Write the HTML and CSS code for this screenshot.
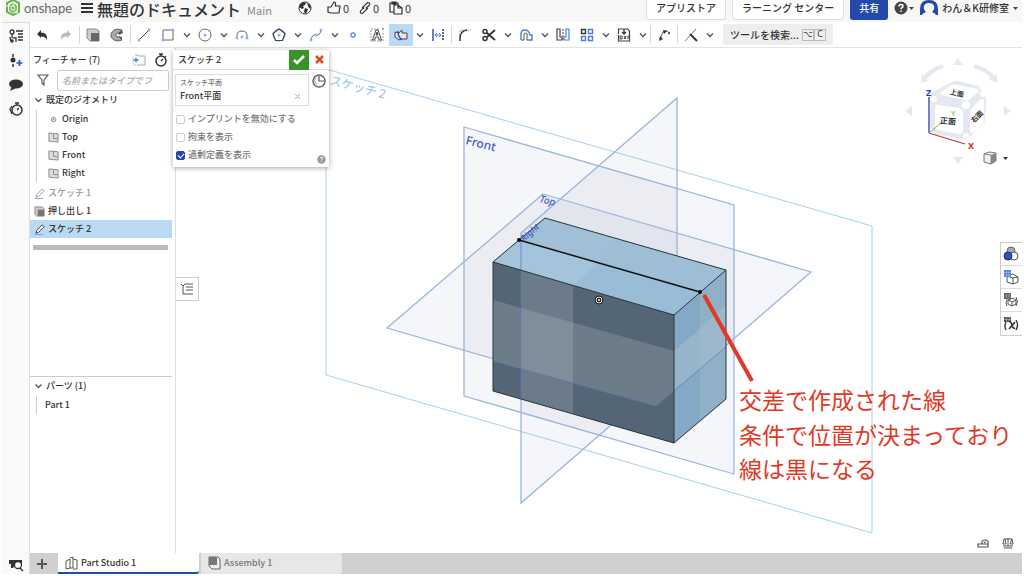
FILE: index.html
```html
<!DOCTYPE html>
<html lang="ja">
<head>
    <meta charset="UTF-8">
    <meta name="viewport" content="width=device-width, initial-scale=1.0">
    <title>無題のドキュメント</title>
    <link rel="stylesheet" href="styles.css">
</head>
<body>
    <svg class="defs" aria-hidden="true">
        <symbol id="chev" viewBox="0 0 8 8"><path d="M1 2.500l3 3 3-3" fill="none" stroke="#555" stroke-width="1.400"/></symbol>
        <symbol id="plane" viewBox="0 0 12 12"><path d="M1 1l10 1v9l-10-1z" fill="#ddd" stroke="#888"/><path d="M6 2v5l5 .5" fill="none" stroke="#888"/></symbol>
        <symbol id="pencil" viewBox="0 0 12 12"><path d="M2 10l1-3 6-6 2 2-6 6z" fill="#fff" stroke="currentColor"/><path d="M1 11.500h9" stroke="#7d9be0"/></symbol>
    </svg>

    <header class="header">
        <svg class="logo" width="16" height="16" viewBox="0 0 16 16"><path d="M8 0l6 3v9l-6 3-6-3V3z" fill="none" stroke="#68b346" stroke-width="2"/><path d="M8 4l3 2v4l-3 2-3-2V6z" fill="none" stroke="#68b346" stroke-width="1.500"/><path d="M1 6h4M11 2l-3 3M9 12l4 1" stroke="#f7f7f7"/><circle cx="8" cy="8" r="1.500" fill="#68b346"/></svg>
        <span class="brand">onshape</span>
        <button class="plain menu" aria-label="メニュー"><svg width="12" height="12" viewBox="0 0 12 12"><path d="M0 2h12M0 6h12M0 10h12" stroke="#333" stroke-width="2"/></svg></button>
        <h1>無題のドキュメント</h1>
        <span class="branch">Main</span>
        <svg class="globe" width="14" height="14" viewBox="0 0 14 14"><circle cx="7" cy="7" r="6" fill="#fff" stroke="#333"/><path d="M2 3l3-2 3 1-1 2-2 1 1 2-2 1-3-2zM7 7l3 1-1 3-2 2-1-3zM9 2l3 2 1 4-2-1-1-2z" fill="#333"/></svg>
        <button class="plain stat"><svg width="14" height="14" viewBox="0 0 14 14"><path d="M1 6h3l3-5q2 0 1.500 4H13l-1 7H4L1 11z" fill="none" stroke="#333" stroke-width="1.200"/></svg>0</button>
        <button class="plain stat"><svg width="12" height="14" viewBox="0 0 12 14"><path d="M5 8L3.500 6.500l5-5q3 0 2 2.500L7 7.500M7 6l1.500 1.500-5 5q-3 0-2-2.500L5 6" fill="none" stroke="#333" stroke-width="1.100"/></svg>0</button>
        <button class="plain stat"><svg width="14" height="14" viewBox="0 0 14 14"><path d="M5 11H1V2h8v2M3 1h4v2H3zM5 4h4l4 3v6H5zM9 4v3h4" fill="none" stroke="#333" stroke-width="1.200"/></svg>0</button>
        <nav class="account">
            <button class="box">アプリストア</button>
            <button class="box">ラーニング センター</button>
            <button class="share">共有</button>
            <button class="plain help" aria-label="ヘルプ"><svg width="20" height="14" viewBox="0 0 20 14"><circle cx="7" cy="7" r="6.500" fill="#444"/><path d="M5 5.500q0-2 2-2t2 1.700q0 1-1.200 1.500-.8.500-.8 1.500M7 9.500v1.500" fill="none" stroke="#fff" stroke-width="1.500"/><path d="M15 6h5l-2.500 3z" fill="#444"/></svg></button>
            <button class="plain user"><svg width="18" height="16" viewBox="0 0 18 16"><path d="M0 15V9Q0 0 9 0t9 9v6h-2q-1-2-4-3 3-3 2-6-1-3-5-3T4 6q-1 3 2 6-3 1-4 3z" fill="#2349ad"/></svg>わん＆K研修室<svg width="6" height="5" viewBox="0 0 6 5"><path d="M0 1h5L2.500 4z" fill="#444"/></svg></button>
        </nav>
    </header>

    <div class="app">
        <aside class="rail">
            <button class="plain first" aria-label="フィーチャーリスト"><svg width="16" height="16" viewBox="0 0 16 16"><g fill="none" stroke="#333" stroke-width="1.300"><circle cx="4" cy="4" r="2"/><path d="M4 6v3q0 1 4 1v4M8 3h7M10 6h5M10 9h5M10 12h5M2 9l1 4"/></g><circle cx="4" cy="13" r="1.700" fill="#333"/></svg></button>
            <button class="plain" aria-label="挿入"><svg width="16" height="16" viewBox="0 0 16 16"><path d="M5 1v14" stroke="#333" stroke-width="1.500" stroke-dasharray="3 2"/><circle cx="5" cy="7" r="2.500" fill="#333"/><path d="M11.500 7v6M8.500 10h6" stroke="#2b54c8" stroke-width="1.700"/></svg></button>
            <button class="plain" aria-label="コメント"><svg width="16" height="16" viewBox="0 0 16 16"><ellipse cx="8" cy="7" rx="7" ry="4.500" fill="#333"/><path d="M4 9l-2 5 6-3z" fill="#333"/></svg></button>
            <button class="plain" aria-label="履歴"><svg width="16" height="16" viewBox="0 0 16 16"><circle cx="9" cy="9" r="5" fill="none" stroke="#333" stroke-width="1.500"/><path d="M9 4V2M7 2h4M9 9l2-2M4 5L2 8l2 5" fill="none" stroke="#333" stroke-width="1.300"/></svg></button>
            <button class="plain last" aria-label="タブを検索"><svg width="16" height="16" viewBox="0 0 16 16"><path d="M1 3h13v4H8L5 11H3V7H1z" fill="#333"/><circle cx="10" cy="8" r="3.500" fill="#fff" stroke="#333" stroke-width="1.300"/><path d="M12 11l3 3" stroke="#333" stroke-width="1.500"/></svg></button>
        </aside>

        <div class="main">
            <div class="toolbar">
                <button class="tool" aria-label="元に戻す"><svg viewBox="0 0 16 16"><path d="M3 7l4-4v2.500q7 0 6 8-1-4-6-4V11z" fill="#333"/></svg></button>
                <button class="tool" aria-label="やり直し"><svg viewBox="0 0 16 16"><path d="M13 7L9 3v2.500q-7 0-6 8 1-4 6-4V11z" fill="#bbb"/></svg></button>
                <i class="sep"></i>
                <button class="tool" aria-label="押し出し"><svg viewBox="0 0 16 16"><path d="M2 2h9l3 2v10H5l-3-3z" fill="#ccc" stroke="#888"/><path d="M6 6h8v8H6z" fill="#666"/></svg></button>
                <button class="tool" aria-label="回転"><svg viewBox="0 0 16 16"><path d="M13 3Q9 1 5 3 1 6 2 10q2 4 7 4l4-1-2-3q-4 1-4-2t4-2z" fill="#aaa" stroke="#666"/><path d="M9 6l4-3 1 3-4 2zM9 9l4 1v3" fill="#555"/></svg></button>
                <i class="sep"></i>
                <button class="tool" aria-label="線"><svg viewBox="0 0 16 16"><path d="M3 13L13 3" stroke="#444"/><circle class="pt" cx="3" cy="13" r="1.500"/><circle class="pt" cx="13" cy="3" r="1.500"/></svg></button>
                <button class="tool" aria-label="矩形"><svg viewBox="0 0 16 16"><path class="ln" d="M3 3h10v10H3z"/><circle class="pt" cx="3" cy="13" r="1.500"/><circle class="pt" cx="13" cy="3" r="1.500"/></svg></button>
                <button class="drop" aria-label="矩形の種類"><svg><use href="#chev"/></svg></button>
                <button class="tool" aria-label="円"><svg viewBox="0 0 16 16"><circle class="ln" cx="8" cy="8" r="6"/><circle class="pt" cx="8" cy="8" r="1.500"/><circle class="pt" cx="12.500" cy="4" r="1.200"/></svg></button>
                <button class="drop" aria-label="円の種類"><svg><use href="#chev"/></svg></button>
                <button class="tool" aria-label="円弧"><svg viewBox="0 0 16 16"><path class="ln" d="M3 11Q2 4 8 4t5 7"/><circle class="pt" cx="3" cy="11" r="1.500"/><circle class="pt" cx="8" cy="10" r="1.500"/><circle class="pt" cx="13" cy="11" r="1.500"/></svg></button>
                <button class="drop" aria-label="円弧の種類"><svg><use href="#chev"/></svg></button>
                <button class="tool" aria-label="多角形"><svg viewBox="0 0 16 16"><circle cx="8" cy="8" r="6" fill="none" stroke="#8ba8e8"/><path d="M8 2l6 4.500-2.500 7h-7L2 6.500z" fill="none" stroke="#444" stroke-width="1.200"/><circle class="pt" cx="8" cy="8" r="1.500"/></svg></button>
                <button class="drop" aria-label="多角形の種類"><svg><use href="#chev"/></svg></button>
                <button class="tool" aria-label="スプライン"><svg viewBox="0 0 16 16"><path class="ln" d="M3 13q1-6 5-5t5-5"/><circle class="pt" cx="3" cy="13" r="1.500"/><circle class="pt" cx="8" cy="8" r="1.500"/><circle class="pt" cx="13" cy="3" r="1.500"/></svg></button>
                <button class="drop" aria-label="スプラインの種類"><svg><use href="#chev"/></svg></button>
                <button class="tool" aria-label="点"><svg viewBox="0 0 16 16"><circle cx="8" cy="8" r="2.200" fill="none" stroke="#4c7bdf" stroke-width="1.200"/></svg></button>
                <button class="tool" aria-label="テキスト"><svg viewBox="0 0 16 16"><path d="M2 14V2h9M2 14h12V6" fill="none" stroke="#999" stroke-dasharray="2 1"/><path d="M3.500 13L7 3h2l3.500 10h-2.300L9.300 10H6.500l-.8 3zM7 8h2L8 5z" fill="#fff" stroke="#444"/><circle class="pt" cx="14" cy="2" r="1.200"/></svg></button>
                <button class="tool active" aria-label="使用"><svg viewBox="0 0 16 16"><path d="M2 5l4 1 3-3v3h5v6H9l-3 1-4-3z" fill="#e7e7e7" stroke="#444"/><path d="M5 4q0 6 4 9" fill="none" stroke="#2b54c8" stroke-width="1.500"/></svg></button>
                <button class="drop" aria-label="使用の種類"><svg><use href="#chev"/></svg></button>
                <button class="tool" aria-label="寸法"><svg viewBox="0 0 16 16"><path d="M3 2v12" stroke="#2b54c8" stroke-width="1.500"/><path d="M13 2v12" stroke="#333" stroke-width="1.500" stroke-dasharray="2 1"/><path d="M5 8h6M7 6L5 8l2 2M9 6l2 2-2 2" fill="none" stroke="#4c7bdf"/></svg></button>
                <i class="sep"></i>
                <button class="tool" aria-label="フィレット"><svg viewBox="0 0 16 16"><path d="M3 14v-3q0-7 7-8" fill="none" stroke="#333" stroke-width="1.500"/><path d="M3 8V3h5M10 3h4" fill="none" stroke="#8ba8e8" stroke-dasharray="2 1"/></svg></button>
                <button class="tool" aria-label="トリム"><svg viewBox="0 0 16 16"><path d="M6 6l8 7M6 10l8-7" stroke="#333" stroke-width="1.800"/><circle cx="4" cy="4.500" r="2" fill="none" stroke="#333" stroke-width="1.500"/><circle cx="4" cy="11.500" r="2" fill="none" stroke="#333" stroke-width="1.500"/></svg></button>
                <button class="drop" aria-label="トリムの種類"><svg><use href="#chev"/></svg></button>
                <button class="tool" aria-label="オフセット"><svg viewBox="0 0 16 16"><path d="M3 13V7q0-4 4-4t5 5h2v5H9" fill="none" stroke="#4c7bdf" stroke-width="1.400"/><path d="M3 13h3V8q0-2 2-2t1 4v3" fill="none" stroke="#555"/></svg></button>
                <button class="drop" aria-label="オフセットの種類"><svg><use href="#chev"/></svg></button>
                <button class="tool" aria-label="ミラー"><svg viewBox="0 0 16 16"><path d="M2 2h3v8h2v3H2z" fill="none" stroke="#444" stroke-width="1.200"/><path d="M8 2v12" stroke="#444" stroke-dasharray="2 1"/><path d="M14 2h-3v8H9v3h5z" fill="none" stroke="#4c7bdf" stroke-width="1.200"/></svg></button>
                <button class="tool" aria-label="パターン"><svg viewBox="0 0 16 16"><g fill="none" stroke="#4c7bdf" stroke-width="1.400"><path d="M2.500 2.500h4v4h-4z" stroke="#333"/><path d="M9.500 2.500h4v4h-4zM2.500 9.500h4v4h-4zM9.500 9.500h4v4h-4z"/></g></svg></button>
                <button class="drop" aria-label="パターンの種類"><svg><use href="#chev"/></svg></button>
                <button class="tool" aria-label="DXF 挿入"><svg viewBox="0 0 16 16"><path d="M2.500 7V2h9l2 2v10h-11V8" fill="none" stroke="#444" stroke-width="1.200"/><path d="M8 2v5M6 5l2 2 2-2" fill="none" stroke="#333" stroke-width="1.300"/><path d="M4 9v3h2V9zM8 9l2 3M10 9l-2 3M12 12V9h1" fill="none" stroke="#444"/></svg></button>
                <button class="drop" aria-label="挿入の種類"><svg><use href="#chev"/></svg></button>
                <i class="sep"></i>
                <button class="tool" aria-label="計測"><svg viewBox="0 0 16 16"><path d="M4 12l3-7q3-3 6 1" fill="none" stroke="#555"/><path d="M3 14l1-5 3 3zM7 3l4 1-3 3z" fill="#333"/><circle cx="13" cy="6" r="1.200" fill="#555"/></svg></button>
                <i class="sep"></i>
                <button class="tool" aria-label="拘束"><svg viewBox="0 0 16 16"><path d="M2 14L13 2" stroke="#4c7bdf"/><path d="M7 7l7 7" stroke="#333" stroke-width="2"/></svg></button>
                <button class="drop" aria-label="拘束の種類"><svg><use href="#chev"/></svg></button>
                <button class="search">ツールを検索...<span class="keys"><kbd>⌥</kbd><kbd>C</kbd></span></button>
            </div>

            <div class="workspace">
                <aside class="panel">
                    <section class="features">
                        <div class="panel-head">
                            <h2>フィーチャー (7)</h2>
                            <button class="plain" aria-label="フォルダーを追加"><svg width="14" height="12" viewBox="0 0 14 12"><path d="M3 1h3l1 1h6v9H5" fill="none" stroke="#aaa"/><path d="M1 3v8h3" fill="none" stroke="#aaa" stroke-dasharray="1 1"/><path d="M4 3.500v5M1.500 6h5" stroke="#4c7bdf" stroke-width="1.300"/></svg></button>
                            <button class="plain" aria-label="再構築時間"><svg width="14" height="14" viewBox="0 0 14 14"><circle cx="7" cy="8" r="5" fill="none" stroke="#333" stroke-width="1.500"/><path d="M7 3V1M5 1h4M7 8l2-2M11 3l1 1" stroke="#333" stroke-width="1.400"/></svg></button>
                        </div>
                        <div class="filter">
                            <svg width="12" height="12" viewBox="0 0 12 12"><path d="M1 1h10L7 6v5L5 9V6z" fill="none" stroke="#555" stroke-width="1.100"/></svg>
                            <input type="text" aria-label="フィルター" placeholder="名前またはタイプでフ">
                        </div>
                        <div class="row"><svg width="9" height="8"><use href="#chev"/></svg>既定のジオメトリ</div>
                        <ul class="children">
                            <li class="row"><svg width="11" height="11" viewBox="0 0 12 12"><circle cx="6" cy="6" r="2.500" fill="none" stroke="#888"/><circle cx="6" cy="6" r="1" fill="#777"/></svg>Origin</li>
                            <li class="row"><svg width="11" height="11"><use href="#plane"/></svg>Top</li>
                            <li class="row"><svg width="11" height="11"><use href="#plane"/></svg>Front</li>
                            <li class="row"><svg width="11" height="11"><use href="#plane"/></svg>Right</li>
                        </ul>
                        <div class="row muted"><svg width="11" height="11"><use href="#pencil"/></svg>スケッチ 1</div>
                        <div class="row"><svg width="11" height="11" viewBox="0 0 12 12"><path d="M1 1h8l2 2v8H3L1 9z" fill="#ccc" stroke="#888"/><path d="M4 4h7v7H4z" fill="#777"/></svg>押し出し 1</div>
                        <div class="row selected"><svg width="11" height="11"><use href="#pencil"/></svg>スケッチ 2</div>
                        <div class="rollback"></div>
                    </section>
                    <section class="parts">
                        <div class="row"><svg width="9" height="8"><use href="#chev"/></svg>パーツ (1)</div>
                        <ul class="children"><li class="row part">Part 1</li></ul>
                    </section>
                </aside>

                <main class="canvas">
                    <svg class="scene" viewBox="176 48 846 505" preserveAspectRatio="xMinYMin meet">
                        <path class="sketch" d="M326 69L872 226V533L326 375z"/>
                        <path class="datum" d="M464 127L734 205V474L464 396z"/>
                        <path class="datum" d="M677 98V368L521 503V233z"/>
                        <path class="datum" d="M543 194L811 272 656 406 387 328z"/>

                        <path d="M493 262L545 218 726 270 674 315z" fill="#9abdd7"/>
                        <path d="M493 262L545 218 620 240 573 286z" fill="#a4c4dc"/>
                        <path d="M519 240L545 218 726 270 700 292z" fill="#a0bfd4" opacity=".7"/>
                        <path d="M493 262L674 315V443L493 391z" fill="#546575"/>
                        <path d="M493 300L674 351V391L656 406 493 361z" fill="#a5b5b8" opacity=".3"/>
                        <path d="M521 270L573 286V414L521 399z" fill="#c2ced8" opacity=".22"/>
                        <path d="M674 315L726 270V399L674 443z" fill="#84a9c7"/>
                        <path d="M700 292L726 270V399L700 421z" fill="#9bb8c9" opacity=".5"/>
                        <path d="M674 351L726 306V347L674 391z" fill="#b2c5d0" opacity=".4"/>
                        <g fill="none" stroke="#5778b5" opacity=".7">
                            <path d="M521 240V399M493 361L656 406 726 347"/>
                        </g>
                        <path d="M493 262L674 315V443L493 391zM493 262L545 218 726 270 674 315M726 270V399L674 443" fill="none" stroke="#26343f"/>
                        <path d="M519 240L700 292" stroke="#111" stroke-width="1.500"/>
                        <circle cx="519" cy="240" r="2"/>
                        <circle cx="700" cy="292" r="2"/>
                        <circle cx="599" cy="300" r="3" fill="#222" stroke="#fff" stroke-width="1"/>
                        <circle cx="599" cy="300" r="4" fill="none" stroke="#222"/>
                        <circle cx="599" cy="300" r="1" fill="#fff"/>
                        <path d="M704 295L752 381" stroke="#df3a26" stroke-width="4"/>

                        <text class="sketch-label" transform="translate(329 84) rotate(15)">スケッチ 2</text>
                        <text class="datum-label" transform="translate(465 144) rotate(14)">Front</text>
                        <text class="datum-label small" transform="translate(539 202) rotate(14)">Top</text>
                        <text class="datum-label tiny" transform="translate(524 242) rotate(-42)">Right</text>
                        <g class="note">
                            <text x="739" y="409">交差で作成された線</text>
                            <text x="739" y="444">条件で位置が決まっており</text>
                            <text x="739" y="478">線は黒になる</text>
                        </g>
                    </svg>

                    <form class="dialog">
                        <div class="dialog-head">
                            <h2>スケッチ 2</h2>
                            <button type="button" class="ok" aria-label="確定"><svg width="12" height="12" viewBox="0 0 12 12"><path d="M1 6l3 3 7-7" fill="none" stroke="#fff" stroke-width="2.500"/></svg></button>
                            <button type="button" class="plain cancel" aria-label="キャンセル"><svg width="9" height="9" viewBox="0 0 9 9"><path d="M1 1l7 7M8 1L1 8" stroke="#dc4a22" stroke-width="2.500"/></svg></button>
                        </div>
                        <div class="dialog-body">
                            <div class="plane-row">
                                <div class="plane-field">
                                    <label for="plane-input">スケッチ平面</label>
                                    <div class="plane-value">
                                        <input id="plane-input" type="text" value="Front平面">
                                        <button type="button" class="plain" aria-label="クリア"><svg width="7" height="7" viewBox="0 0 7 7"><path d="M1 1l5 5M6 1L1 6" stroke="#aaa"/></svg></button>
                                    </div>
                                </div>
                                <button type="button" class="plain" aria-label="履歴"><svg width="14" height="14" viewBox="0 0 14 14"><circle cx="7" cy="7" r="6" fill="none" stroke="#666" stroke-width="1.500"/><path d="M7 2v5h5" fill="none" stroke="#555" stroke-width="1.200"/><path d="M4 3.500Q1 7 5 10.500" fill="none" stroke="#999"/></svg></button>
                            </div>
                            <label class="check"><input type="checkbox">インプリントを無効にする</label>
                            <label class="check"><input type="checkbox">拘束を表示</label>
                            <label class="check"><input type="checkbox" checked>過剰定義を表示</label>
                            <button type="button" class="plain dialog-help" aria-label="ヘルプ"><svg width="9" height="9" viewBox="0 0 14 14"><circle cx="7" cy="7" r="6.500" fill="#999"/><path d="M5 5.500q0-2 2-2t2 1.700q0 1-1.200 1.500-.8.500-.8 1.500M7 9.500v1.500" fill="none" stroke="#fff" stroke-width="1.500"/></svg></button>
                        </div>
                    </form>

                    <button class="list-toggle" aria-label="リストを表示"><svg width="14" height="14" viewBox="0 0 14 14"><path d="M5 2h8M6 5h7M6 8h7M5 12h8M1 2l2 2 2-2M3 4v8h2" fill="none" stroke="#555"/></svg></button>

                    <svg class="view-cube" width="112" height="112" viewBox="903 56 112 112">
                        <g fill="#e4e8f0">
                            <path d="M958 58l5 7h-10zM958 164l5-7h-10zM905 111l7-5v10zM1011 111l-7-5v10zM921 83l1-9 6 7zM997 83l0-9-8 5z"/>
                            <path d="M931 93L952 82 957 81 979 86 986 98 985 121 967 140 935 134 930 127z"/>
                        </g>
                        <path d="M925 78q6-8 18-12M974 66q12 3 19 11" fill="none" stroke="#e4e8f0" stroke-width="4"/>
                        <g fill="#fff">
                            <path d="M941 92l10-7q2-1 6 0l20 4q4 1 1 3l-8 7q-2 2-6 1l-22-5q-4-1-1-3z"/>
                            <path d="M935 108q0-4 4-3l20 3q4 1 4 5v17q0 5-5 4l-19-4q-4-1-4-4z"/>
                            <path d="M970 112q0-3 3-5l7-7q4-3 4 1v18q0 3-3 6l-7 7q-4 3-4-1z"/>
                            <circle cx="934" cy="99" r="3"/><circle cx="966" cy="105" r="4"/><circle cx="983" cy="94" r="3"/><circle cx="966" cy="136" r="3"/>
                        </g>
                        <path d="M929 133V97" stroke="#2b35d0" stroke-width="1.300"/>
                        <path d="M929 133l36 11" stroke="#cf3030" stroke-width="1.300"/>
                        <path d="M929 133l12-10" stroke="#6bc24b"/>
                        <text x="951" y="116" class="axis y" fill="#8bd07b">Y</text>
                        <text x="940" y="124" class="face" transform="rotate(5 948 121)">正面</text>
                        <text x="950" y="96" class="face small" transform="rotate(12 958 93)">上面</text>
                        <text x="970" y="120" class="face small" transform="rotate(-45 976 117)">右面</text>
                        <text x="926" y="96" class="axis" fill="#2b35d0">Z</text>
                        <text x="968" y="149" class="axis" fill="#cf3030">X</text>
                    </svg>
                    <button class="plain view-mode" aria-label="表示"><svg width="27" height="14" viewBox="0 0 27 14"><path d="M1 3l5-2 7 1v8l-5 3-7-2z" fill="#eee" stroke="#777"/><path d="M8 4l5-2v8l-5 3z" fill="#888"/><path d="M1 3l7 1v9" fill="none" stroke="#888"/><path d="M20 6h5l-2.500 3z" fill="#333"/></svg></button>

                    <div class="side-tools">
                        <button aria-label="外観"><svg viewBox="0 0 16 16"><circle cx="8" cy="5" r="4" fill="#aaa" stroke="#666"/><circle cx="11" cy="10" r="4" fill="#fff" stroke="#555"/><circle cx="5" cy="10" r="4" fill="#2b54c8" stroke="#234"/></svg></button>
                        <button aria-label="構成"><svg viewBox="0 0 16 16"><path d="M4 7l6-2 5 3v5l-5 2-6-2zM4 7l6 2 5-1M10 9v6" fill="#fff" stroke="#555"/><path d="M1 1h7v7H1z" fill="#4c7bdf"/><path d="M3.500 1v7M6 1v7M1 3.500h7M1 6h7" stroke="#bcd" stroke-width=".5"/></svg></button>
                        <button aria-label="構成変数"><svg viewBox="0 0 16 16"><path d="M5 8l5-2 3 2v4l-4 2-4-2zM5 8l4 2 4-2M9 10v4M4 7q-2 4 0 7M13 5q3 4 0 9" fill="none" stroke="#555"/><path d="M1 1h7v6H1z" fill="#555"/><path d="M3.500 1v6M6 1v6M1 3h7M1 5h7" stroke="#bbb" stroke-width=".5"/></svg></button>
                        <button aria-label="変数"><svg viewBox="0 0 16 16"><path d="M1 1h7v5H1z" fill="#555"/><path d="M3.500 1v5M6 1v5M1 3.500h7" stroke="#bbb" stroke-width=".5"/><path d="M3 6q-2 4 0 8M13 4q3 5 0 10" fill="none" stroke="#333" stroke-width="1.400"/><path d="M6 6q2-1 3 3t3 3M12 6l-6 7" fill="none" stroke="#333" stroke-width="1.600"/></svg></button>
                    </div>
                    <div class="measure">
                        <button class="plain" aria-label="測定"><svg width="12" height="10" viewBox="0 0 12 10"><path d="M1 6h10v3H1zM5 6q-1-4 3-4t3 4M7 5q0-1 2-1" fill="none" stroke="#555" stroke-width="1.200"/></svg></button>
                        <button class="plain" aria-label="質量特性"><svg width="12" height="12" viewBox="0 0 12 12"><path d="M6 1v8M2 2h8M2 2L1 7h3L3 2M10 2L8 7h3L10 2M1 9h10M2 11h8" fill="none" stroke="#555"/></svg></button>
                    </div>
                </main>
            </div>

            <footer class="tabs">
                <button class="plain add" aria-label="タブを追加"><svg width="12" height="12" viewBox="0 0 12 12"><path d="M6 1v10M1 6h10" stroke="#555" stroke-width="2"/></svg></button>
                <button class="tab current"><svg width="13" height="14" viewBox="0 0 13 14"><path d="M1 5l4-2v9l-4 1zM5 2l3-1v11H5M8 3l4 1v9H8" fill="none" stroke="#555"/></svg>Part Studio 1</button>
                <button class="tab"><svg width="13" height="14" viewBox="0 0 13 14"><path d="M1 1h9l2 2v10H4l-3-3z" fill="#eee" stroke="#666"/><path d="M1 1h8v8H1z" fill="#777"/></svg>Assembly 1</button>
            </footer>
        </div>
    </div>
</body>
</html>
```

FILE: styles.css
```css
* {
    box-sizing: border-box;
}
body {
    margin: 0;
    padding: 0 2px 2px;
    min-height: 100vh;
    display: flex;
    flex-direction: column;
    font-family: "Noto Sans CJK JP", "Noto Sans", sans-serif;
    font-size: 9px;
    font-weight: 500;
    line-height: 16px;
    color: #333;
    background: #fff;
}
svg {
    flex: none;
}
.defs {
    position: absolute;
    width: 0;
    height: 0;
}
h1, h2, ul {
    margin: 0;
    padding: 0;
}
button, input {
    font: inherit;
    color: inherit;
}
button {
    cursor: pointer;
}
.plain {
    display: flex;
    align-items: center;
    padding: 0;
    border: 0;
    background: none;
}

/* header */
.header {
    height: 22px;
    padding: 0 3px;
    display: flex;
    align-items: flex-start;
    background: #f7f7f7;
    white-space: nowrap;
}
.brand {
    margin-left: 3px;
    width: 49px;
    font-family: Lato, sans-serif;
    font-size: 13px;
    font-weight: 400;
    color: #666;
}
.menu {
    height: 16px;
    margin: 0 4px 0 8px;
}
h1 {
    font-size: 16px;
    font-weight: 500;
    line-height: 18px;
}
.branch {
    margin: 2px 26px 0 6px;
    font-size: 11px;
    font-weight: 400;
    color: #888;
}
.globe {
    margin: 1px 15px 0 0;
}
.stat {
    height: 16px;
    margin-right: 10px;
    gap: 2px;
    font-size: 11px;
    font-weight: 400;
}
.account {
    margin-left: auto;
    display: flex;
    gap: 6px;
    font-size: 10px;
}
.box, .share {
    height: 20px;
    padding: 0 9px 4px;
    border: 1px solid #ddd;
    border-top: 0;
    border-radius: 0 0 3px 3px;
    background: #fff;
}
.share {
    border: 0;
    color: #fff;
    background: #2349ad;
}
.help, .user {
    height: 16px;
}
.user {
    gap: 4px;
}

/* side rail and toolbar */
.app {
    flex: 1;
    display: flex;
}
.rail {
    width: 28px;
    display: flex;
    flex-direction: column;
    align-items: center;
    gap: 8px;
    border-right: 1px solid #ddd;
    background: #f9f9f9;
}
.rail .first {
    width: 100%;
    height: 26px;
    justify-content: center;
    border-top: 1px solid #ddd;
    margin-bottom: -3px;
}
.rail .last {
    margin-top: auto;
    margin-bottom: 1px;
}
.main {
    flex: 1;
    min-width: 0;
    display: flex;
    flex-direction: column;
}
.toolbar {
    height: 26px;
    display: flex;
    align-items: center;
    border-bottom: 1px solid #e4e4e4;
}
.tool, .drop {
    width: 24px;
    height: 22px;
    padding: 0;
    border: 0;
    display: flex;
    align-items: center;
    justify-content: center;
    background: none;
}
.tool svg {
    width: 16px;
    height: 16px;
}
.drop {
    width: 13px;
}
.drop svg {
    width: 8px;
    height: 8px;
}
.tool.active {
    background: #b9daf2;
}
.sep {
    width: 1px;
    height: 18px;
    margin: 0 1px;
    background: #d8d8d8;
}
.ln {
    fill: none;
    stroke: #666;
}
.pt {
    fill: #8fb0f2;
}
.search {
    height: 21px;
    margin-left: 7px;
    padding: 0 7px;
    border: 0;
    display: flex;
    align-items: center;
    gap: 3px;
    font-size: 10px;
    white-space: nowrap;
    background: #eee;
}
.keys {
    display: flex;
}
kbd {
    width: 12px;
    border: 1px solid #bbb;
    font: 8px/10px "DejaVu Sans", sans-serif;
}

/* feature list */
.workspace {
    flex: 1;
    display: flex;
}
.panel {
    width: 146px;
    display: flex;
    flex-direction: column;
    border-right: 1px solid #ddd;
}
.features {
    flex: 1;
}
.parts {
    height: 35%;
    margin-right: 3px;
    border-top: 1px solid #ccc;
}
.panel-head {
    height: 21px;
    padding: 2px 7px 0 3px;
    display: flex;
    align-items: center;
    gap: 8px;
}
.panel-head h2 {
    flex: 1;
    font-size: 9px;
    font-weight: 500;
}
.filter {
    height: 22px;
    padding: 0 6px 0 7px;
    display: flex;
    align-items: center;
    gap: 8px;
}
.filter input {
    width: 100%;
    min-width: 0;
    height: 21px;
    padding: 0 4px;
    border: 1px solid #ccc;
    border-radius: 2px;
}
.filter input::placeholder {
    color: #aaa;
    font-style: italic;
}
.row {
    height: 18px;
    padding-left: 4px;
    display: flex;
    align-items: center;
    gap: 3px;
    white-space: nowrap;
}
.children {
    list-style: none;
    margin: 1px 0 2px 6px;
    padding-left: 7px;
    border-left: 1px solid #ccc;
}
.children .part {
    padding-left: 1px;
}
.muted {
    color: #999;
}
.selected {
    margin-right: 3px;
    background: #b9daf2;
}
.rollback {
    height: 5px;
    margin: 7px 7px 0 3px;
    background: #bbb;
}

/* canvas */
.canvas {
    flex: 1;
    min-width: 0;
    position: relative;
}
.scene {
    display: block;
    width: 100%;
}
.sketch {
    fill: none;
    stroke: #a9d0ec;
}
.datum {
    fill: #6d84b0;
    fill-opacity: .07;
    stroke: #9cb5dc;
    stroke-width: 1.3;
}
.sketch-label {
    font-size: 12px;
    font-weight: 400;
    fill: #8cc4ee;
}
.datum-label {
    font-family: "Noto Sans", sans-serif;
    font-size: 12px;
    font-weight: 500;
    fill: #3f5ac0;
}
.datum-label.small {
    font-size: 10px;
    font-style: italic;
}
.datum-label.tiny {
    font-size: 9px;
    font-style: italic;
}
.note text {
    font-size: 23px;
    font-weight: 400;
    fill: #df3a26;
}

/* sketch dialog */
.dialog {
    position: absolute;
    left: -3px;
    top: 2px;
    width: 156px;
    background: #fff;
    box-shadow: 0 1px 5px rgba(0, 0, 0, .35);
}
.dialog-head {
    height: 20px;
    padding-left: 5px;
    display: flex;
    border-bottom: 1px solid #ddd;
}
.dialog-head h2 {
    flex: 1;
    font-size: 9px;
    font-weight: 500;
    line-height: 19px;
}
.ok {
    width: 20px;
    height: 20px;
    padding: 0;
    border: 0;
    display: flex;
    align-items: center;
    justify-content: center;
    background: #38932a;
}
.cancel {
    width: 20px;
    justify-content: center;
}
.dialog-body {
    position: relative;
    padding: 4px 3px 3px 2px;
    color: #777;
}
.plane-row {
    display: flex;
    align-items: flex-start;
    gap: 3px;
    margin-bottom: 4px;
}
.plane-field {
    flex: 1;
    height: 32px;
    padding: 1px 4px;
    border: 1px solid #ddd;
}
.plane-field label {
    display: block;
    font-size: 7px;
    line-height: 12px;
}
.plane-value {
    display: flex;
    padding-right: 3px;
}
.plane-value input {
    flex: 1;
    min-width: 0;
    height: 16px;
    padding: 0;
    border: 0;
    font-size: 9px;
    color: #333;
}
.check {
    height: 18px;
    display: flex;
    align-items: center;
    gap: 3px;
}
.check input {
    appearance: none;
    width: 9px;
    height: 9px;
    margin: 0 0 0 1px;
    border: 1px solid #ccc;
    border-radius: 2px;
}
.check input:checked {
    border-color: #2349ad;
    background: #2349ad;
}
.check input:checked::before {
    content: "";
    display: block;
    width: 5px;
    height: 3px;
    margin: 1px;
    border: solid #fff;
    border-width: 0 0 1px 1px;
    transform: rotate(-45deg);
}
.dialog-help {
    position: absolute;
    right: 3px;
    bottom: 3px;
}

/* overlays on the canvas */
.list-toggle {
    position: absolute;
    left: 0;
    top: 229px;
    width: 23px;
    height: 24px;
    padding: 0;
    border: 1px solid #ccc;
    border-left: 0;
    display: flex;
    align-items: center;
    justify-content: center;
    background: #fff;
}
.view-cube {
    position: absolute;
    top: 8px;
    right: 7px;
}
.face {
    font-size: 8px;
    font-weight: 700;
    fill: #333;
}
.face.small {
    font-size: 7px;
}
.axis {
    font: 700 9px "Noto Sans", sans-serif;
}
.axis.y {
    font-size: 7px;
}
.view-mode {
    position: absolute;
    top: 103px;
    right: 12px;
}
.side-tools {
    position: absolute;
    top: 194px;
    right: 0;
    display: flex;
    flex-direction: column;
    border: 1px solid #ccc;
    border-right: 0;
}
.side-tools button {
    width: 21px;
    height: 23px;
    padding: 0 2px;
    border: 0;
    border-bottom: 1px solid #ddd;
    background: #fff;
}
.side-tools button:last-child {
    border-bottom: 0;
}
.side-tools svg {
    display: block;
    width: 16px;
    height: 16px;
}
.measure {
    position: absolute;
    right: 8px;
    bottom: 4px;
    display: flex;
    gap: 13px;
}

/* document tabs */
.tabs {
    height: 21px;
    display: flex;
    gap: 2px;
    background: #cfcfcf;
}
.add {
    width: 26px;
    padding-left: 6px;
}
.tab {
    width: 141px;
    padding: 0 7px;
    border: 0;
    border-bottom: 2px solid transparent;
    border-radius: 0 0 3px 0;
    display: flex;
    align-items: center;
    gap: 3px;
    color: #777;
    background: #e7e7e7;
}
.tab.current {
    border-bottom-color: #2349ad;
    color: #333;
    background: #fff;
}
```
